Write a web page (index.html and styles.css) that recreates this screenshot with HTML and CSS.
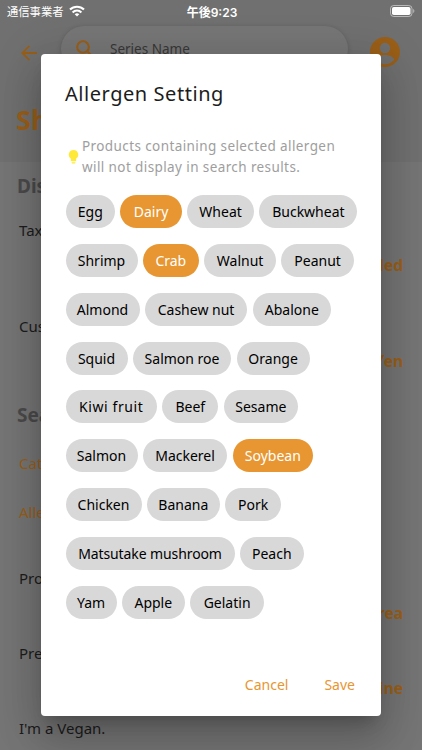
FILE: index.html
```html
<!DOCTYPE html>
<html lang="en">
<head>
<meta charset="UTF-8">
<meta name="viewport" content="width=device-width, initial-scale=1.0">
<title>Allergen Setting</title>
<link rel="stylesheet" href="styles.css">
</head>
<body>
<div class="page">
    <header class="header">
        <div class="status-bar">
            <div class="carrier">
                <span>通信事業者</span>
                <svg width="16" height="12" viewBox="0 0 16 12" fill="none" stroke="#fff" stroke-width="2.1">
                    <path d="M1 4.6a10 10 0 0 1 14 0"/>
                    <path d="M3.6 7.4a6.2 6.2 0 0 1 8.8 0"/>
                    <path d="M8 11.6 5.7 9.3a3.3 3.3 0 0 1 4.6 0z" fill="#fff" stroke="none"/>
                </svg>
            </div>
            <div class="time">午後9:23</div>
            <svg class="battery" width="25" height="12" viewBox="0 0 25 12">
                <rect x=".5" y=".5" width="21.5" height="11" rx="3.2" fill="none" stroke="#fff" stroke-opacity=".5"/>
                <rect x="2" y="2" width="18.5" height="8" rx="1.8" fill="#fff"/>
                <path d="M23.2 4v4c1.6-.7 1.6-3.3 0-4z" fill="#fff" fill-opacity=".5"/>
            </svg>
        </div>
        <div class="toolbar">
            <svg class="back" width="16" height="16" viewBox="0 0 16 16" fill="none" stroke="currentColor" stroke-width="1.8">
                <path d="M16 8H1.4M8.5.8 1.3 8l7.2 7.2"/>
            </svg>
            <div class="search">
                <svg width="18" height="18" viewBox="0 0 18 18" fill="none" stroke="currentColor" stroke-width="2.1">
                    <circle cx="7" cy="7" r="5.8"/>
                    <path d="m11.2 11.2 5.6 5.6"/>
                </svg>
                <span>Series Name</span>
            </div>
            <svg class="account" width="36" height="36" viewBox="0 0 24 24" fill="currentColor">
                <path d="M12 2C6.48 2 2 6.48 2 12s4.48 10 10 10 10-4.48 10-10S17.52 2 12 2zm0 3.9a3.5 3.5 0 1 1 0 7 3.5 3.5 0 0 1 0-7zm0 14.2c-2.6 0-4.8-1.2-6.1-3 .1-2 4.1-3.1 6.1-3.1s6 1.1 6.1 3.1c-1.3 1.8-3.5 3-6.1 3z"/>
            </svg>
        </div>
        <h1>Sh</h1>
    </header>
    <main class="settings">
        <h2>Dis</h2>
        <div class="setting tax"><span>Tax</span><b>led</b></div>
        <div class="setting currency"><span>Cus</span><b>Yen</b></div>
        <h2 class="search-title">Sea</h2>
        <div class="link">Cat</div>
        <div class="link">Alle</div>
        <div class="setting product"><span>Pro</span><b>rea</b></div>
        <div class="setting preferred"><span>Pre</span><b>ine</b></div>
        <div class="setting vegan"><span>I'm a Vegan.</span></div>
    </main>
</div>

<div class="dialog">
    <h3>Allergen Setting</h3>
    <div class="hint">
        <svg width="11" height="15" viewBox="0 0 11 15" fill="#ffe938">
            <path d="M5.5 0a4.7 4.7 0 0 0-2.7 8.55V10.5c0 .5.3.8.8.8h3.8c.5 0 .8-.3.8-.8V8.55A4.7 4.7 0 0 0 5.5 0z"/>
            <path d="M3.6 12.2h3.8v.6c0 .4-.2.7-.6.7H4.2c-.4 0-.6-.3-.6-.7z"/>
        </svg>
        <p>Products containing selected allergen<br>will not display in search results.</p>
    </div>
    <div class="chips">
        <div class="row">
            <span class="chip egg">Egg</span>
            <span class="chip dairy selected">Dairy</span>
            <span class="chip wheat">Wheat</span>
            <span class="chip buckwheat">Buckwheat</span>
        </div>
        <div class="row">
            <span class="chip shrimp">Shrimp</span>
            <span class="chip crab selected">Crab</span>
            <span class="chip walnut">Walnut</span>
            <span class="chip peanut">Peanut</span>
        </div>
        <div class="row">
            <span class="chip almond">Almond</span>
            <span class="chip cashew">Cashew nut</span>
            <span class="chip abalone">Abalone</span>
        </div>
        <div class="row">
            <span class="chip squid">Squid</span>
            <span class="chip roe">Salmon roe</span>
            <span class="chip orange">Orange</span>
        </div>
        <div class="row">
            <span class="chip kiwi">Kiwi fruit</span>
            <span class="chip beef">Beef</span>
            <span class="chip sesame">Sesame</span>
        </div>
        <div class="row">
            <span class="chip salmon">Salmon</span>
            <span class="chip mackerel">Mackerel</span>
            <span class="chip soybean selected">Soybean</span>
        </div>
        <div class="row">
            <span class="chip chicken">Chicken</span>
            <span class="chip banana">Banana</span>
            <span class="chip pork">Pork</span>
        </div>
        <div class="row">
            <span class="chip matsutake">Matsutake mushroom</span>
            <span class="chip peach">Peach</span>
        </div>
        <div class="row">
            <span class="chip yam">Yam</span>
            <span class="chip apple">Apple</span>
            <span class="chip gelatin">Gelatin</span>
        </div>
    </div>
    <div class="actions">
        <button class="cancel">Cancel</button>
        <button class="save">Save</button>
    </div>
</div>
</body>
</html>
```
FILE: styles.css
```css
* {
    box-sizing: border-box;
}
body {
    margin: 0;
    height: 750px;
    overflow: hidden;
    position: relative;
    background-color: #757575;
    font-family: "Noto Sans", "Noto Sans CJK JP", sans-serif;
}
h1, h2, h3, p {
    margin: 0;
}
.page {
    height: 750px;
    overflow: hidden;
    color: #1c1c1c;
}
.header {
    height: 162px;
    background-color: #707070;
    color: #9a5f18;
}
.status-bar {
    display: flex;
    justify-content: space-between;
    align-items: center;
    height: 22px;
    padding: 0 7px;
    color: white;
    font-family: "Inter", "Noto Sans CJK JP", sans-serif;
    font-size: 11.3px;
}
.carrier, .battery {
    width: 160px;
}
.carrier {
    display: flex;
    align-items: center;
    gap: 5px;
}
.battery {
    width: 25px;
    margin-left: 133px;
}
.time {
    font-size: 12px;
    font-weight: 600;
}
.toolbar {
    display: flex;
    height: 48px;
    margin-top: 4px;
    padding-left: 21px;
}
.back {
    margin-top: 19px;
}
.search {
    display: flex;
    align-items: center;
    width: 287px;
    height: 46px;
    margin-left: 24px;
    padding-left: 15px;
    border-radius: 23px;
    background-color: #767676;
    box-shadow: 0 1px 5px rgba(0, 0, 0, 0.18);
}
.search span {
    margin-left: 16px;
    color: #383838;
    font-size: 13.5px;
}
.account {
    margin: 8px 0 0 19px;
}
h1 {
    margin: 26px 0 0 16px;
    font-size: 27px;
    line-height: 40px;
}
.settings {
    padding: 12px 19px 0;
}
h2 {
    margin-left: -2px;
    color: #4a4a4a;
    font-size: 19px;
    line-height: 24px;
}
.setting {
    display: flex;
    justify-content: space-between;
    align-items: flex-start;
    height: 96px;
    font-size: 15px;
    line-height: 20px;
}
.setting b {
    margin-top: 35px;
    color: #9a5f18;
    font-size: 15.5px;
}
.tax {
    margin-top: 22px;
}
.currency {
    height: 76px;
}
.search-title {
    margin-top: 11px;
}
.link {
    margin-top: 24px;
    color: #9a5f18;
    font-size: 15px;
    line-height: 25px;
}
.product {
    height: 75px;
    margin-top: 43px;
}
.preferred {
    height: 75px;
}

/* Modal */
.dialog {
    position: absolute;
    left: 41px;
    top: 54px;
    width: 340px;
    height: 662px;
    padding: 24px 24px 0;
    border-radius: 4px;
    background-color: white;
    box-shadow: 0 11px 15px -7px rgba(0, 0, 0, 0.2), 0 24px 38px 3px rgba(0, 0, 0, 0.14), 0 9px 46px 8px rgba(0, 0, 0, 0.12);
}
h3 {
    color: #1c1c1c;
    font-size: 20px;
    font-weight: 400;
    line-height: 32px;
    letter-spacing: 0.55px;
}
.hint {
    display: flex;
    align-items: center;
    margin-top: 26px;
    padding-left: 3px;
    color: #9e9e9e;
}
.hint svg {
    margin-top: 1px;
}
.hint p {
    margin-left: 3px;
    font-size: 13.5px;
    line-height: 21px;
    white-space: nowrap;
    letter-spacing: 0.4px;
}
.chips {
    display: flex;
    flex-direction: column;
    gap: 15.85px;
    margin: 17px 0 0 0.5px;
}
.row {
    display: flex;
    gap: 5.3px;
}
.chip {
    flex-shrink: 0;
    height: 33px;
    border-radius: 17px;
    background-color: #d8d8d8;
    color: black;
    font-size: 14px;
    font-weight: 450;
    line-height: 34px;
    text-align: center;
    white-space: nowrap;
}
.selected {
    background-color: #e79631;
    color: white;
}
.egg { width: 49.5px; }
.dairy { width: 61.5px; }
.wheat { width: 67px; }
.buckwheat { width: 98px; }
.shrimp, .walnut, .salmon { width: 72px; }
.peanut { width: 72.5px; }
.crab, .beef, .pork { width: 56px; }
.almond, .gelatin { width: 74px; }
.cashew { width: 102.5px; }
.abalone { width: 78.5px; }
.squid { width: 62px; }
.roe { width: 98.5px; }
.orange, .banana { width: 73px; }
.kiwi { width: 91.5px; letter-spacing: 0.6px; }
.sesame { width: 74.5px; }
.mackerel { width: 84.5px; }
.soybean { width: 80.5px; }
.chicken { width: 76px; }
.matsutake { width: 169px; letter-spacing: -0.1px; }
.peach { width: 64px; }
.yam { width: 51px; }
.apple { width: 63px; }
.actions {
    display: flex;
    justify-content: flex-end;
    gap: 36px;
    margin: 55px 2px 0 0;
}
.actions button {
    padding: 0;
    border: none;
    background: none;
    color: #e79631;
    font-family: inherit;
    font-size: 14px;
    line-height: 22px;
}
```
